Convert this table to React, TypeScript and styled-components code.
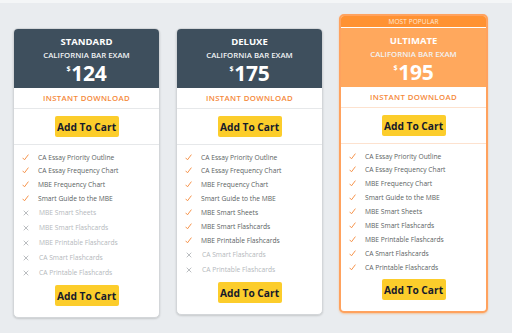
import React from 'react'
import styled, { createGlobalStyle } from 'styled-components'

const Global = createGlobalStyle`
  html, body {
    margin: 0;
    padding: 0;
    background: #e9ecef;
    font-family: 'Open Sans', 'Liberation Sans', sans-serif;
  }
  body {
    border-top: 3px solid #f4f6f7;
  }
`

const Page = styled.div`
  display: flex;
  align-items: flex-start;
  gap: 16px;
  padding: 11px 0 0 13px;
  height: 319px;
  box-sizing: border-box;
`

const Card = styled.div<{ $featured?: boolean }>`
  width: ${(p) => (p.$featured ? 149 : 147)}px;
  box-sizing: border-box;
  margin-top: ${(p) => (p.$featured ? 0 : 14)}px;
  background: #fff;
  border-radius: 5px;
  overflow: hidden;
  border: ${(p) => (p.$featured ? '2px solid #ffa25e' : '1px solid #d3d6d9')};
  box-shadow: ${(p) =>
    p.$featured ? '0 1px 2px rgba(255, 140, 40, 0.4)' : '0 1px 2px rgba(0, 0, 0, 0.15)'};
  display: flex;
  flex-direction: column;
`

const Band = styled.div`
  height: 12px;
  margin-top: -1px;
  background: #ff9232;
  color: #ffe9d6;
  font-size: 6.5px;
  display: flex;
  align-items: center;
  justify-content: center;
  letter-spacing: 0.1px;
`

const Header = styled.div<{ $featured?: boolean }>`
  height: 59px;
  box-sizing: border-box;
  margin-top: ${(p) => (p.$featured ? 1 : 0)}px;
  background: ${(p) => (p.$featured ? '#ffa85d' : '#3e4f5d')};
  color: #fff;
  display: flex;
  flex-direction: column;
  align-items: center;
  padding-top: 7px;
`

const Plan = styled.div`
  font-size: 9.5px;
  font-weight: 700;
  line-height: 12px;
`

const Exam = styled.div`
  font-size: 7.8px;
  font-weight: 600;
  line-height: 11px;
  margin-top: 2px;
  color: #f1f3f5;
`

const Price = styled.div`
  display: flex;
  align-items: flex-start;
  font-size: 21px;
  font-weight: 700;
  line-height: 22px;
  margin-top: 1px;
  letter-spacing: -0.3px;
`

const Dollar = styled.span`
  font-size: 7px;
  line-height: 10px;
  margin-top: 2px;
  margin-right: 1px;
`

const Download = styled.div<{ $featured?: boolean }>`
  height: 20px;
  display: flex;
  align-items: center;
  justify-content: center;
  font-size: 7.8px;
  font-weight: 600;
  letter-spacing: 0.35px;
  color: #f5893a;
  border-bottom: 1px solid ${(p) => (p.$featured ? '#fde2cf' : '#e6e8ea')};
`

const ButtonRow = styled.div<{ $featured?: boolean; $bottom?: boolean }>`
  display: flex;
  justify-content: center;
  padding: ${(p) => (p.$bottom ? '5px 0 11px' : '7px 0 7px')};
  border-bottom: ${(p) =>
    p.$bottom ? 'none' : `1px solid ${p.$featured ? '#fde2cf' : '#e6e8ea'}`};
`

const CartButton = styled.button`
  width: 64px;
  height: 21px;
  border: none;
  border-radius: 2px;
  background: #fccd2b;
  color: #161a2b;
  font-family: inherit;
  font-size: 10.2px;
  font-weight: 700;
  padding: 0;
  cursor: pointer;
`

const List = styled.ul`
  list-style: none;
  margin: 0;
  padding: 6px 0 0 8px;
`

const Item = styled.li<{ $off?: boolean }>`
  display: flex;
  align-items: center;
  height: ${(p) => (p.$off ? 15 : 14)}px;
  font-size: 6.7px;
  color: ${(p) => (p.$off ? '#b4b8bc' : '#5b5f63')};
  &:nth-child(-n + 2) {
    height: 13px;
  }
`

const Mark = styled.span<{ $off?: boolean }>`
  width: 7px;
  display: flex;
  margin: ${(p) => (p.$off ? '0 9px 0 1px' : '0 9px 0 0')};
`

const Check = () => (
  <svg width="7" height="7" viewBox="0 0 7 7">
    <path d="M0.6 3.8 L2.5 5.8 L6.4 0.6" fill="none" stroke="#f5893a" strokeWidth="0.9" />
  </svg>
)

const Cross = () => (
  <svg width="6" height="6" viewBox="0 0 6 6">
    <path d="M0.7 0.7 L5.3 5.3 M5.3 0.7 L0.7 5.3" fill="none" stroke="#a9adb1" strokeWidth="0.8" />
  </svg>
)

const features = [
  'CA Essay Priority Outline',
  'CA Essay Frequency Chart',
  'MBE Frequency Chart',
  'Smart Guide to the MBE',
  'MBE Smart Sheets',
  'MBE Smart Flashcards',
  'MBE Printable Flashcards',
  'CA Smart Flashcards',
  'CA Printable Flashcards',
]

const plans = [
  { name: 'STANDARD', price: '124', included: 4 },
  { name: 'DELUXE', price: '175', included: 7 },
  { name: 'ULTIMATE', price: '195', included: 9, featured: true },
]

export default function App() {
  return (
    <>
      <Global />
      <Page>
        {plans.map((plan) => (
          <Card key={plan.name} $featured={plan.featured}>
            {plan.featured && <Band>MOST POPULAR</Band>}
            <Header $featured={plan.featured}>
              <Plan>{plan.name}</Plan>
              <Exam>CALIFORNIA BAR EXAM</Exam>
              <Price>
                <Dollar>$</Dollar>
                {plan.price}
              </Price>
            </Header>
            <Download $featured={plan.featured}>INSTANT DOWNLOAD</Download>
            <ButtonRow $featured={plan.featured}>
              <CartButton>Add To Cart</CartButton>
            </ButtonRow>
            <List>
              {features.map((f, i) => {
                const off = i >= plan.included
                return (
                  <Item key={f} $off={off}>
                    <Mark $off={off}>{off ? <Cross /> : <Check />}</Mark>
                    {f}
                  </Item>
                )
              })}
            </List>
            <ButtonRow $bottom>
              <CartButton>Add To Cart</CartButton>
            </ButtonRow>
          </Card>
        ))}
      </Page>
    </>
  )
}
